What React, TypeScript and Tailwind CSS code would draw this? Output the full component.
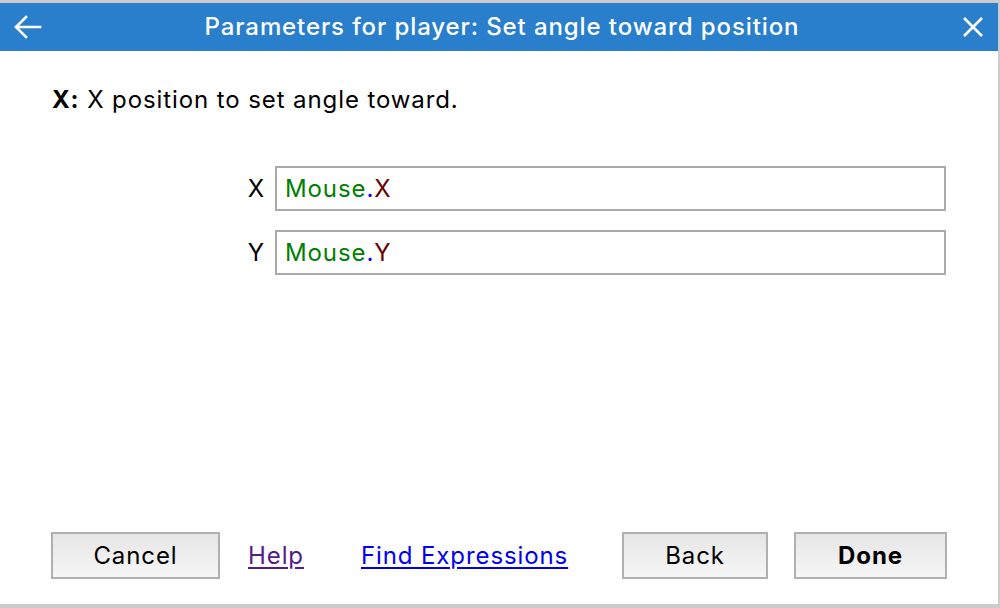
import React from "react";

const font = { fontFamily: "Inter, 'Noto Sans', sans-serif" };

function ExpressionField({ label, value }: { label: string; value: string }) {
  return (
    <div className="flex items-center">
      <span className="w-[28px] pr-[10px] text-right text-black">{label}</span>
      <div className="flex h-[45px] flex-1 items-center border-2 border-[#aaaaaa] bg-white px-[8px]">
        <span className="text-[#008000]">Mouse</span>
        <span className="text-[#0000ff]">.</span>
        <span className="text-[#6b0000]">{value}</span>
      </div>
    </div>
  );
}

function DialogButton({ children, bold, width }: { children: React.ReactNode; bold?: boolean; width: string }) {
  return (
    <button
      className={
        "h-[47px] border-2 border-[#b0b0b0] bg-gradient-to-b from-[#e6e6e6] to-[#f6f6f6] text-black " +
        width +
        (bold ? " font-bold" : "")
      }
    >
      {children}
    </button>
  );
}

export default function App() {
  return (
    <div
      className="h-[608px] w-[1000px] bg-[#cccccc] pt-[3px] pb-[4px] pr-[2px] text-[24px] tracking-[0.9px]"
      style={font}
    >
      <div className="flex h-full flex-col bg-white">
        {/* Header */}
        <div className="flex h-[48px] items-center bg-[#2a7fcc] px-[14px] text-white">
          <svg width="28" height="24" viewBox="0 0 28 24" fill="none" stroke="white" strokeWidth="2.6" strokeLinecap="square">
            <path d="M2 12h24M12 2 2 12l10 10" />
          </svg>
          <div className="flex-1 text-center text-[24px] font-medium tracking-[0.9px]">
            Parameters for player: Set angle toward position
          </div>
          <svg width="22" height="22" viewBox="0 0 22 22" fill="none" stroke="white" strokeWidth="2.6">
            <path d="M2 2l18 18M20 2 2 20" />
          </svg>
        </div>

        {/* Description */}
        <div className="px-[52px] pt-[31px] text-black">
          <span className="font-bold">X:</span> X position to set angle toward.
        </div>

        {/* Fields */}
        <div className="ml-[247px] mr-[52px] mt-[48px] flex flex-col gap-[19px]">
          <ExpressionField label="X" value="X" />
          <ExpressionField label="Y" value="Y" />
        </div>

        <div className="flex-1" />

        {/* Footer */}
        <div className="mb-[25px] flex items-center px-[51px]">
          <DialogButton width="w-[169px]">Cancel</DialogButton>
          <a className="ml-[28px] text-[#551a8b] underline underline-offset-[3px]" href="#">Help</a>
          <a className="ml-[57px] text-[#0000ee] underline underline-offset-[3px]" href="#">Find Expressions</a>
          <div className="flex-1" />
          <div className="flex gap-[26px]">
            <DialogButton width="w-[146px]">Back</DialogButton>
            <DialogButton width="w-[153px]" bold>Done</DialogButton>
          </div>
        </div>
      </div>
    </div>
  );
}
